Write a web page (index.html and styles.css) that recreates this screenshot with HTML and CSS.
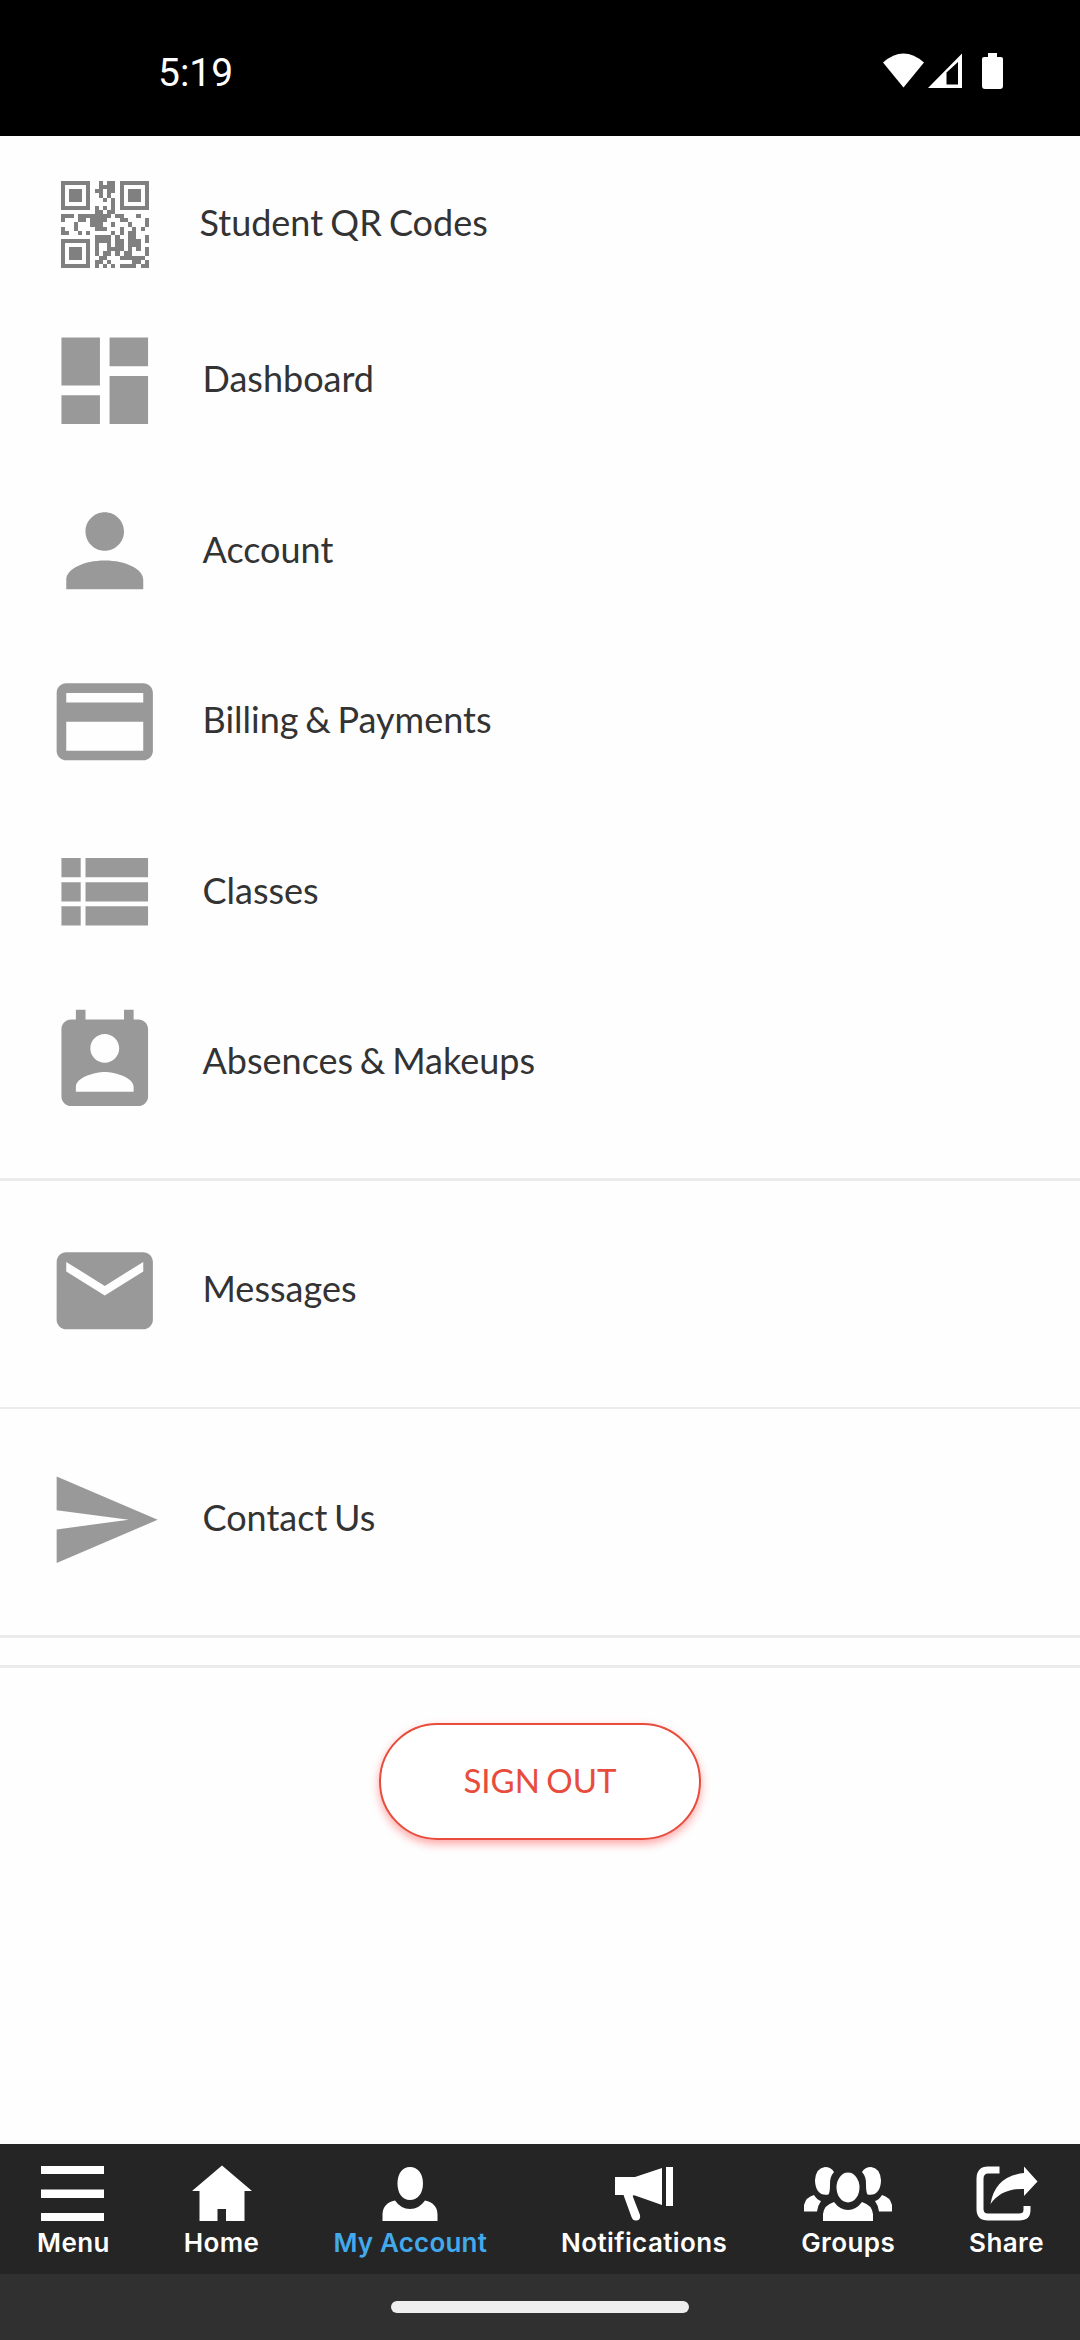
FILE: index.html
```
<!DOCTYPE html>
<html lang="en">
<head>
    <meta charset="UTF-8">
    <meta name="viewport" content="width=device-width, initial-scale=1.0">
    <title>My Account</title>
    <link rel="stylesheet" href="styles.css">
</head>
<body>

    <header class="status-bar">
        <span class="time">5:19</span>
        <svg class="status-icons" viewBox="0 0 124 40" fill="#fff">
            <path d="M0 12.500Q20.500-5.500 41 12.500L20.500 37.500z"/>
            <path fill-rule="evenodd" d="M45 38L79 3.500V38zM63.500 22.500V34.500H75V12z"/>
            <path d="M105 3h9v4h4q2 0 2 2v27q0 3-3 3h-15q-3 0-3-3V9q0-2 2-2h4z"/>
        </svg>
    </header>

    <main>
        <nav class="menu">
            <a class="item qr-item">
                <svg class="qr" viewBox="0 0 21 21" preserveAspectRatio="none" shape-rendering="crispEdges">
                    <path id="qr-path"/>
                </svg>
                <span>Student QR Codes</span>
            </a>
            <a class="item">
                <svg class="icon" viewBox="0 0 24 24"><path d="M3 13h8V3H3v10zm0 8h8v-6H3v6zm10 0h8V11h-8v10zm0-18v6h8V3h-8z"/></svg>
                <span>Dashboard</span>
            </a>
            <a class="item">
                <svg class="icon" viewBox="0 0 24 24"><path d="M12 12c2.210 0 4-1.790 4-4s-1.790-4-4-4-4 1.790-4 4 1.790 4 4 4zm0 2c-4.420 0-8 1.790-8 4v2h16v-2c0-2.210-3.580-4-8-4z"/></svg>
                <span>Account</span>
            </a>
            <a class="item">
                <svg class="icon" viewBox="0 0 24 24"><path d="M20 4H4c-1.110 0-1.990.890-1.990 2L2 18c0 1.110.890 2 2 2h16c1.110 0 2-.890 2-2V6c0-1.110-.890-2-2-2zm0 14H4v-6h16v6zm0-10H4V6h16v2z"/></svg>
                <span>Billing &amp; Payments</span>
            </a>
            <a class="item">
                <svg class="icon" viewBox="0 0 24 24"><path d="M3 14h4v-4H3v4zm0 5h4v-4H3v4zM3 9h4V5H3v4zm5 5h13v-4H8v4zm0 5h13v-4H8v4zM8 5v4h13V5H8z"/></svg>
                <span>Classes</span>
            </a>
            <a class="item">
                <svg class="icon" viewBox="0 0 24 24"><path d="M19 3h-1V1h-2v2H8V1H6v2H5c-1.110 0-2 .900-2 2v14c0 1.100.890 2 2 2h14c1.100 0 2-.900 2-2V5c0-1.100-.900-2-2-2zm-7 3c1.660 0 3 1.340 3 3s-1.340 3-3 3-3-1.340-3-3 1.340-3 3-3zm6 12H6v-1c0-2 4-3.100 6-3.100s6 1.100 6 3.100v1z"/></svg>
                <span>Absences &amp; Makeups</span>
            </a>
        </nav>
        <nav class="menu single">
            <a class="item">
                <svg class="icon" viewBox="0 0 24 24"><path d="M20 4H4c-1.100 0-1.990.900-1.990 2L2 18c0 1.100.900 2 2 2h16c1.100 0 2-.900 2-2V6c0-1.100-.900-2-2-2zm0 4l-8 5-8-5V6l8 5 8-5v2z"/></svg>
                <span>Messages</span>
            </a>
        </nav>
        <nav class="menu single contact">
            <a class="item">
                <svg class="icon" viewBox="0 0 24 24"><path d="M2.010 21L23 12 2.010 3 2 10l15 2-15 2z"/></svg>
                <span>Contact Us</span>
            </a>
        </nav>
        <section class="sign-out">
            <button>SIGN OUT</button>
        </section>
    </main>

    <footer>
        <nav class="tabs">
            <a class="tab">
                <svg width="64" height="58" viewBox="0 0 64 58"><path d="M0 1h63v8H0zM0 24.500h63V33H0zM0 48h63v8H0z"/></svg>
                <span>Menu</span>
            </a>
            <a class="tab">
                <svg width="60" height="58" viewBox="0 0 60 58"><path d="M30 .5L60 26H52.500V56H34V44H25.500V56H7.500V26H0z"/></svg>
                <span>Home</span>
            </a>
            <a class="tab active">
                <svg width="56" height="58" viewBox="0 0 56 58">
                    <path d="M28 2C36 2 41 9 41 18.500S36 35 28 35 15.500 28 15.500 18.500 20 2 28 2z"/>
                    <path d="M13 35.500Q19 44 28 44T43 35.500Q55 38 55.500 49V56H.5V49Q1 38 13 35.500z"/>
                </svg>
                <span>My Account</span>
            </a>
            <a class="tab">
                <svg width="60" height="58" viewBox="0 0 60 58">
                    <path d="M1 12H21L48 3V40L21 30.500Q18 29.500 19 32L26 50Q27 55 22.500 55.500 19 56 17.500 52L9.500 30H1zM52 2h7v39h-7z"/>
                </svg>
                <span>Notifications</span>
            </a>
            <a class="tab">
                <svg width="88" height="58" viewBox="0 0 88 58">
                    <ellipse cx="44" cy="22.500" rx="11.500" ry="15"/>
                    <path d="M30 37Q36 45 44 45T58 37Q68 40 69 49V56H19V49Q20 40 30 37z"/>
                    <path id="group-side" d="M30 7Q25.500 12 26 20 26 27 24.500 29.500 18 31 14 26 11 22 11 15 12 3 21 2 27 2 30 7zM10 30Q13 35 17 36 14 40 13 46.500H0V40Q2 32 10 30z"/>
                    <use href="#group-side" transform="matrix(-1 0 0 1 88 0)"/>
                </svg>
                <span>Groups</span>
            </a>
            <a class="tab">
                <svg width="62" height="58" viewBox="0 0 62 58">
                    <path class="frame" d="M23.500 5H12Q4 5 4 14V44Q4 52 12 52H43Q51 52 51 45V41"/>
                    <path d="M48 1.500L61.500 16.500 48 31V24Q26 23 14.500 39 19 11 48 8z"/>
                </svg>
                <span>Share</span>
            </a>
        </nav>
        <div class="gesture-area"><div class="gesture-bar"></div></div>
    </footer>

    <script>
        const qrRows = [
            "#######..#.##.#######",
            "#.....#..####.#.....#",
            "#.###.#.##.##.#.###.#",
            "#.###.#..#.#..#.###.#",
            "#.###.#...#.#.#.###.#",
            "#.....#.....#.#.....#",
            "#######.#.#.#.#######",
            "........##.##........",
            "###.########.##...#..",
            "#...##.####...##....#",
            "...#...###..#...#...#",
            "#..#....###...#..#.#.",
            "##..#.#.....#.#.##...",
            "........####.#..##..#",
            "#######.####.##.###.#",
            "#.....#.#..#.##.###..",
            "#.###.#.#..####.#.#.#",
            "#.###.#.#.##.#.##...#",
            "#.###.#..##...######.",
            "#.....#.##.#.....##.#",
            "#######.#.#.#.####.##"
        ];

        let d = "";
        qrRows.forEach((row, y) => {
            for (let x = 0; x < row.length; x++) {
                if (row[x] === "#") d += `M${x} ${y}h1v1h-1z`;
            }
        });
        document.getElementById("qr-path").setAttribute("d", d);
    </script>
</body>
</html>
```
FILE: styles.css
```
* {
    box-sizing: border-box;
}

body {
    margin: 0;
    height: 2340px;
    display: flex;
    flex-direction: column;
    background: #fefefe;
    color: #333;
    font-family: Lato, sans-serif;
    overflow: hidden;
}

.status-bar {
    height: 136px;
    padding: 0 73px 0 158px;
    display: flex;
    justify-content: space-between;
    align-items: center;
    background: #000;
    color: #fff;
}

.time {
    font: 39px/44px Roboto, sans-serif;
    padding-top: 9px;
}

.status-icons {
    width: 124px;
    height: 40px;
    margin-top: 4px;
}

main {
    flex: 1;
}

.menu {
    padding-top: 18px;
    height: 1045px;
    border-bottom: 3px solid #ebebeb;
}

.item {
    display: flex;
    align-items: center;
    height: 170.500px;
    padding-left: 46.500px;
    font-size: 36px;
    line-height: 44px;
    word-spacing: -2.500px;
}

.item span {
    padding-bottom: 4px;
}

.icon {
    width: 115.500px;
    height: 115.500px;
    margin-right: 40.500px;
    fill: #999;
}

.qr-item {
    height: 141px;
    padding-left: 61px;
    word-spacing: -2px;
}

.qr-item span {
    padding-bottom: 6px;
}

.qr {
    width: 88px;
    height: 87px;
    margin-right: 50.500px;
    fill: #808080;
}

.single {
    height: 228px;
    padding-top: 24px;
    border-bottom-width: 2px;
}

.contact {
    height: 229px;
    padding-top: 25px;
    border-bottom-width: 3px;
}

.sign-out {
    margin-top: 27px;
    padding-top: 55px;
    border-top: 3px solid #ebebeb;
    text-align: center;
}

.sign-out button {
    width: 322px;
    height: 117px;
    padding: 0 0 3px;
    border: 2px solid #e74c3c;
    border-radius: 59px;
    background: #fff;
    color: #e74c3c;
    font: 33px Lato, sans-serif;
    word-spacing: -2px;
    box-shadow: 0 4px 10px rgba(255, 0, 0, 0.35);
}

.tabs {
    display: flex;
    justify-content: space-between;
    height: 130px;
    padding: 21px 36px 0 37px;
    background: #252525;
    color: #fff;
}

.tab {
    display: flex;
    flex-direction: column;
    align-items: center;
    font: 600 26px/32px Inter, sans-serif;
    letter-spacing: 0.400px;
}

.tab svg {
    fill: #fff;
    margin-bottom: 4px;
}

.active {
    color: #42a9ed;
    letter-spacing: 0.200px;
}

.frame {
    fill: none;
    stroke: #fff;
    stroke-width: 7px;
}

.gesture-area {
    height: 66px;
    padding-top: 27px;
    background: #303030;
}

.gesture-bar {
    width: 298px;
    height: 12px;
    margin: 0 auto;
    border-radius: 6px;
    background: #eee;
}
```
